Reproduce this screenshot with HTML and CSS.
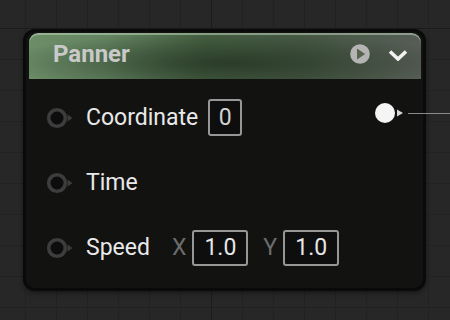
FILE: index.html
```html
<!DOCTYPE html>
<html lang="en">
<head>
    <meta charset="UTF-8">
    <meta name="viewport" content="width=device-width, initial-scale=1.0">
    <title>Panner</title>
    <link rel="stylesheet" href="styles.css">
</head>
<body>

    <svg width="0" height="0" class="defs">
        <filter id="soft"><feGaussianBlur stdDeviation="0.6"/></filter>
    </svg>

    <div class="node">
        <div class="node-header">
            <span class="node-title">Panner</span>
            <div class="header-icons">
                <svg class="icon-play" width="20" height="20" viewBox="0 0 20 20">
                    <circle cx="10" cy="10" r="9.8" fill="#b4b4b4"/>
                    <polygon points="7,4.6 15.2,10 7,15.4" fill="#58634f"/>
                </svg>
                <svg class="icon-chevron" width="20" height="12" viewBox="0 0 20 12">
                    <polyline points="2,2.5 10,10 18,2.5" fill="none" stroke="#f2f2f2" stroke-width="3.6"/>
                </svg>
            </div>
        </div>

        <div class="node-body">
            <div class="pin-row">
                <svg class="pin-in" width="30" height="24" viewBox="0 0 30 24">
                    <g filter="url(#soft)">
                        <circle cx="11" cy="12" r="8.3" fill="#0b0b0b" stroke="#3c3c3c" stroke-width="3.6"/>
                        <polygon points="21.5,8.5 26.5,12 21.5,15.5" fill="#3c3c3c"/>
                    </g>
                </svg>
                <span class="pin-label">Coordinate</span>
                <span class="value-box small">0</span>

                <div class="pin-out">
                    <svg width="34" height="24" viewBox="0 0 34 24">
                        <g filter="url(#soft)">
                            <circle cx="11" cy="12" r="10" fill="#f5f5f5"/>
                            <polygon points="23,8.5 29,12 23,15.5" fill="#d6d6d6"/>
                        </g>
                    </svg>
                    <span class="wire"></span>
                </div>
            </div>

            <div class="pin-row">
                <svg class="pin-in" width="30" height="24" viewBox="0 0 30 24">
                    <g filter="url(#soft)">
                        <circle cx="11" cy="12" r="8.3" fill="#0b0b0b" stroke="#3c3c3c" stroke-width="3.6"/>
                        <polygon points="21.5,8.5 26.5,12 21.5,15.5" fill="#3c3c3c"/>
                    </g>
                </svg>
                <span class="pin-label">Time</span>
            </div>

            <div class="pin-row">
                <svg class="pin-in" width="30" height="24" viewBox="0 0 30 24">
                    <g filter="url(#soft)">
                        <circle cx="11" cy="12" r="8.3" fill="#0b0b0b" stroke="#3c3c3c" stroke-width="3.6"/>
                        <polygon points="21.5,8.5 26.5,12 21.5,15.5" fill="#3c3c3c"/>
                    </g>
                </svg>
                <span class="pin-label">Speed</span>
                <span class="axis first">X</span>
                <span class="value-box">1.0</span>
                <span class="axis">Y</span>
                <span class="value-box">1.0</span>
            </div>
        </div>
    </div>

</body>
</html>
```

FILE: styles.css
```css
body {
    margin: 0;
    width: 450px;
    height: 320px;
    overflow: hidden;
    padding: 29px 0 0 23px;
    box-sizing: border-box;
    font-family: 'Roboto', 'Liberation Sans', sans-serif;
    background-color: #272727;
    background-image:
        linear-gradient(#1c1c1c, #1c1c1c),
        linear-gradient(#1c1c1c, #1c1c1c),
        linear-gradient(to right, #222222 1px, transparent 1px),
        linear-gradient(to bottom, #222222 1px, transparent 1px);
    background-size: 1px 100%, 100% 1px, 31px 31px, 31px 31px;
    background-position: 211px 0, 0 28px, 25px 0, 0 28px;
    background-repeat: no-repeat, no-repeat, repeat, repeat;
}

.defs {
    position: absolute;
}

/* node card */
.node {
    width: 403px;
    height: 262px;
    box-sizing: border-box;
    border: 3px solid #0a0a0a;
    border-radius: 12px;
    background-color: #121311;
    box-shadow: 0 2px 4px rgba(0, 0, 0, 0.4);
}

.node-header {
    display: flex;
    align-items: center;
    height: 46px;
    margin: 1px 2px 0 3px;
    padding: 0 13px 4px 24px;
    box-sizing: border-box;
    border-radius: 9px 9px 0 0;
    background-image:
        radial-gradient(ellipse 230px 30px at 200px 30px, rgba(34, 48, 33, 0.75), rgba(34, 48, 33, 0) 100%),
        linear-gradient(to right, #6c8d67 0%, #638460 20%, #466142 45%, #475a45 70%, #565d55 100%);
    box-shadow: inset 0 2px 0 rgba(190, 210, 185, 0.55);
}

.node-title {
    font-size: 24px;
    font-weight: bold;
    color: #c9c9c9;
}

.header-icons {
    display: flex;
    align-items: center;
    margin-left: auto;
    gap: 18px;
}

.icon-chevron {
    margin-top: 2px;
}

/* pins */
.node-body {
    padding-top: 6px;
}

.pin-row {
    display: flex;
    align-items: center;
    height: 65px;
    padding-left: 20px;
}

.pin-label {
    margin-left: 10px;
    font-size: 23px;
    color: #e9e9e9;
}

.value-box {
    display: flex;
    align-items: center;
    justify-content: center;
    width: 56px;
    height: 36px;
    box-sizing: border-box;
    border: 2px solid #979797;
    border-radius: 3px;
    background-color: #0e0e0e;
    font-size: 23px;
    color: #e6e6e6;
}

.value-box.small {
    width: 34px;
    height: 37px;
    margin-left: 10px;
    color: #d2d2d2;
}

.axis {
    margin: 0 6px 0 15px;
    font-size: 23px;
    color: #6c6c6c;
}

.axis.first {
    margin-left: 22px;
}

.pin-out {
    position: relative;
    display: flex;
    margin-left: auto;
    margin-right: 15px;
    margin-bottom: 10px;
}

.wire {
    position: absolute;
    left: 34px;
    top: 12px;
    width: 60px;
    height: 1px;
    background-color: #8a8a8a;
}
```
